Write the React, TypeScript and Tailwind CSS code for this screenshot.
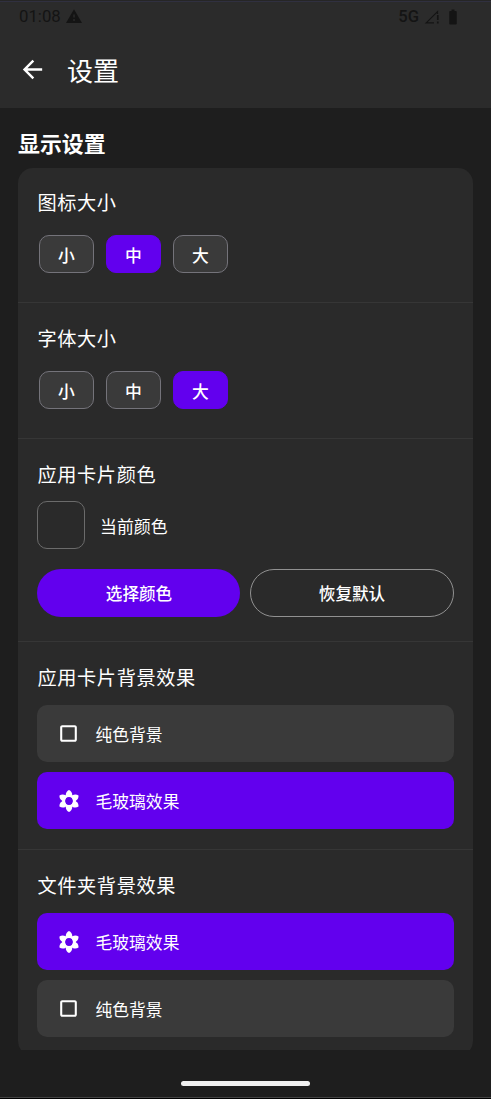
import React from "react";
import clsx from "clsx";
import { MdArrowBack, MdBatteryFull, MdCropSquare } from "react-icons/md";

const sizes = ["小", "中", "大"];

const StatusBar = () => {
  return (
    <div className="flex h-[30px] items-center justify-between pl-[19px] pr-[29px] text-[#141414]">
      <div className="flex items-center gap-[4px]">
        <span className="pb-[2px] font-[Roboto] text-[16.8px] leading-[28px]">01:08</span>
        <svg viewBox="0 0 18 18" className="size-[18px]">
          <path d="M9 1.2L17 15H1z" fill="currentColor" />
          <path d="M9 6.5v3M9 11v2" stroke="#2b2b2b" strokeWidth="1.4" />
        </svg>
      </div>
      <div className="flex items-center">
        <span className="font-[Roboto] text-[16.6px] font-medium leading-[30px]">5G</span>
        {/* weak signal */}
        <svg viewBox="0 0 16 16" className="ml-[5px] size-4" fill="none">
          <path d="M10 13.8H2.2L13.5 2.6V5" stroke="currentColor" strokeWidth="1.2" />
          <path d="M13.8 6v5M13.8 12.6v1.9" stroke="currentColor" strokeWidth="1.7" />
        </svg>
        <MdBatteryFull className="mb-px ml-[4px] size-[18px]" />
      </div>
    </div>
  );
};

const petals = [0, 60, 120, 180, 240, 300];

const FlowerIcon = () => {
  return (
    <svg viewBox="0 0 24 24" className="size-6">
      {petals.map((angle) => (
        <path
          key={angle}
          transform={`rotate(${angle} 12 12)`}
          d="M12 1C13.9 1.9 15.3 3.6 15.3 6.3L14.3 8H9.7L8.7 6.3C8.7 3.6 10.1 1.9 12 1z"
          fill="currentColor"
        />
      ))}
      <circle cx="12" cy="12" r="5.2" fill="none" stroke="currentColor" strokeWidth="2.6" />
    </svg>
  );
};

const Section = ({
  title,
  className,
  children,
}: {
  title: string;
  className?: string;
  children: React.ReactNode;
}) => {
  return (
    <section className={clsx("shrink-0 border-[#363636] px-[19px]", className)}>
      <h3 className="pl-[0.5px] text-[19.2px] leading-7 tracking-[0.6px]">{title}</h3>
      {children}
    </section>
  );
};

const SizePicker = ({ selected }: { selected: string }) => {
  return (
    <div className="mt-[19px] flex gap-3 pl-[2px]">
      {sizes.map((size) => (
        <button
          key={size}
          className={clsx(
            "h-[38px] w-[55px] rounded-[10px] border pt-px text-[16.8px] font-medium leading-[34px]",
            size === selected ? "border-[#6200ee] bg-[#6200ee]" : "border-[#74737a] bg-[#3a3a3a]"
          )}
        >
          {size}
        </button>
      ))}
    </div>
  );
};

const Option = ({ label, active }: { label: string; active?: boolean }) => {
  return (
    <button
      className={clsx(
        "flex h-[57px] items-center gap-[14.5px] rounded-[10px] pl-[19px] text-[16.8px]",
        active ? "bg-[#6200ee]" : "bg-[#3a3a3a]"
      )}
    >
      <span className="flex w-[25px] justify-center">
        {active ? <FlowerIcon /> : <MdCropSquare className="size-[25px]" />}
      </span>
      <span className="pt-[2px]">{label}</span>
    </button>
  );
};

const App = () => {
  return (
    <div className="flex h-[1099px] w-[491px] flex-col border-b border-black bg-[#1e1e1e] font-['Noto_Sans_CJK_SC',sans-serif] text-white">
      <header className="h-[108px] border-t border-[#262626] bg-[#2b2b2b]">
        <div className="h-px bg-[#303040]" />
        <StatusBar />
        <div className="flex h-[74px] items-center pl-[18px]">
          <MdArrowBack className="size-[29px]" />
          <h1 className="ml-[20px] pt-px text-[26px] leading-8">设置</h1>
        </div>
      </header>

      <main className="flex h-[942px] flex-col overflow-hidden px-[18px] pt-[19px]">
        <h2 className="shrink-0 text-[21.9px] font-bold leading-8">显示设置</h2>
        <div className="mt-[9px] flex h-[888px] shrink-0 flex-col rounded-[15px] bg-[#2a2a2a]">
          <Section title="图标大小" className="h-[135px] border-b pt-5">
            <SizePicker selected="中" />
          </Section>
          <Section title="字体大小" className="h-[136px] border-b pt-[21px]">
            <SizePicker selected="大" />
          </Section>
          <Section title="应用卡片颜色" className="h-[203px] border-b pt-[21px]">
            <div className="mt-[13px] flex items-center gap-[15px]">
              <div className="size-12 rounded-[10px] border border-[#6b6b6b]" />
              <span className="pt-[2px] text-[16.9px]">当前颜色</span>
            </div>
            <div className="mt-5 flex gap-[10px] text-[16.6px] font-medium">
              <button className="h-12 w-[203px] rounded-full bg-[#6200ee] pl-px pt-px">选择颜色</button>
              <button className="h-12 w-[204px] rounded-full border border-[#919191] pt-px">恢复默认</button>
            </div>
          </Section>
          <Section title="应用卡片背景效果" className="h-[208px] border-b pt-[21px]">
            <div className="mt-[14px] flex flex-col gap-[10px]">
              <Option label="纯色背景" />
              <Option label="毛玻璃效果" active />
            </div>
          </Section>
          <Section title="文件夹背景效果" className="pt-[21px]">
            <div className="mt-[14px] flex flex-col gap-[10px]">
              <Option label="毛玻璃效果" active />
              <Option label="纯色背景" />
            </div>
          </Section>
        </div>
      </main>

      {/* gesture bar */}
      <footer className="flex flex-1 justify-center border-b border-[#444] pt-[31px]">
        <div className="h-[5px] w-[129px] rounded-full bg-[#f0f0f0]" />
      </footer>
    </div>
  );
};

export default App;
